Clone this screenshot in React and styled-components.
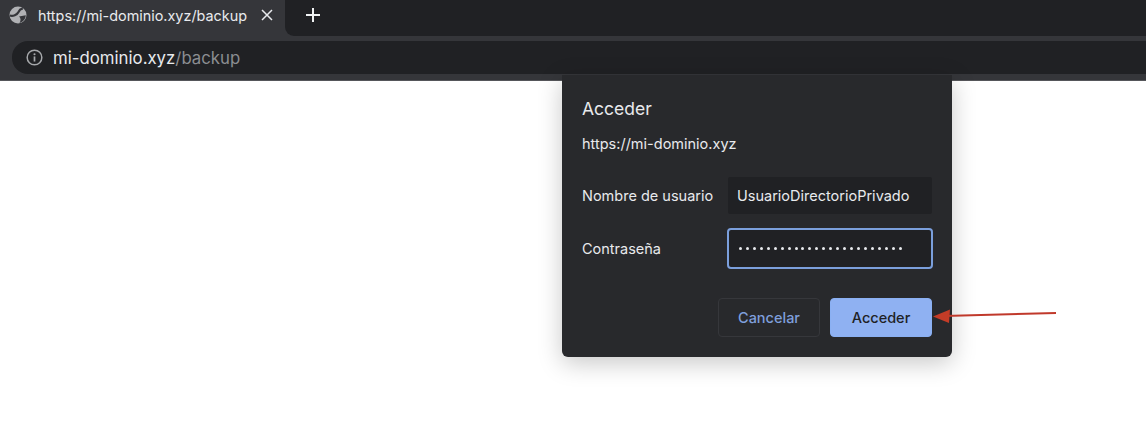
import styled, { createGlobalStyle } from 'styled-components';

const GlobalStyle = createGlobalStyle`
  html, body {
    margin: 0;
    padding: 0;
    background: #fff;
  }
  body {
    font-family: Inter, Roboto, "Liberation Sans", sans-serif;
  }
`;

const Page = styled.div`
  position: relative;
  width: 1146px;
  height: 428px;
  overflow: hidden;
  background: #fff;
`;

const BrowserChrome = styled.header`
  display: flex;
  flex-direction: column;
  background: #35363a;
`;

const TabStrip = styled.div`
  display: flex;
  height: 36px;
`;

const Tab = styled.div`
  flex: none;
  display: flex;
  align-items: center;
  width: 285px;
  height: 30px;
  padding-left: 9px;
  box-sizing: border-box;
  color: #e8eaed;
  font-size: 14.4px;
`;

const TabTitle = styled.span`
  margin-left: 11px;
  white-space: nowrap;
`;

const TabClose = styled.span`
  display: flex;
  margin-left: 14px;
  color: #e8eaed;
`;

const StripRest = styled.div`
  flex: 1;
  display: flex;
  padding: 7px 0 0 20px;
  background: #202124;
  border-bottom-left-radius: 9px;
  color: #f1f3f4;
`;

const Toolbar = styled.div`
  display: flex;
  padding: 5px 0 6px 12px;
  border-bottom: 1px solid #55565a;
`;

const Omnibox = styled.div`
  flex: 1;
  display: flex;
  align-items: center;
  height: 33px;
  padding-left: 14px;
  background: #202124;
  border-radius: 16px 0 0 16px;
  font-size: 16.8px;
`;

const HostText = styled.span`
  margin-left: 10px;
  color: #e8eaed;
`;

const PathText = styled.span`
  color: #8b8d91;
`;

const Dialog = styled.section`
  position: absolute;
  left: 562px;
  top: 75px;
  width: 390px;
  height: 282px;
  box-sizing: border-box;
  padding: 24px 20px 0;
  background: #28292c;
  border-radius: 0 0 6px 6px;
  box-shadow: 0 6px 24px rgba(0, 0, 0, 0.22);
  color: #e8eaed;
`;

const DialogTitle = styled.h2`
  margin: 0;
  font-size: 17.5px;
  font-weight: 400;
  line-height: 20px;
`;

const Origin = styled.p`
  margin: 16px 0 0;
  font-size: 14.5px;
  line-height: 18px;
`;

const Form = styled.div`
  display: grid;
  grid-template-columns: 146px 204px;
  grid-auto-rows: 37px;
  row-gap: 16px;
  align-items: center;
  margin-top: 24px;
`;

const FieldLabel = styled.label`
  font-size: 14.5px;
`;

const Field = styled.div`
  display: flex;
  align-items: center;
  height: 37px;
  box-sizing: border-box;
  padding-left: 9px;
  background: #202124;
  border-radius: 2px;
  font-size: 14.5px;
  ${({ $focused }) => $focused && `
    border: 2px solid #7b9fdc;
    border-radius: 4px;
    height: 41px;
    margin: 0 -1px;
    padding-left: 10px;
  `}
`;

const PasswordDots = styled.span`
  display: flex;
  gap: 3.95px;
`;

const Dot = styled.i`
  display: block;
  width: 3px;
  height: 3px;
  border-radius: 50%;
  background: #e8eaed;
`;

const Actions = styled.div`
  display: flex;
  justify-content: flex-end;
  gap: 10px;
  margin-top: 31px;
`;

const Button = styled.button`
  width: 102px;
  height: 39px;
  padding: 0;
  border: 1px solid ${({ $primary }) => ($primary ? '#8ab0f3' : '#36373b')};
  border-radius: 4px;
  background: ${({ $primary }) => ($primary ? '#8fb1f2' : 'transparent')};
  color: ${({ $primary }) => ($primary ? '#202124' : '#7f9fdc')};
  font-family: inherit;
  font-size: 14.5px;
  font-weight: 500;
`;

const ArrowMark = styled.svg`
  position: absolute;
  left: 930px;
  top: 300px;
`;

const GlobeIcon = () => (
  <svg width="18" height="18" viewBox="0 0 18 18">
    <circle cx="9" cy="9" r="8.5" fill="#b0b1b4" />
    <path
      d="M0.8 9.5 C4 10.5 8 9 9.5 6 C10.2 4.2 11.5 3 13.8 2.4"
      fill="none"
      stroke="#35363a"
      strokeWidth="2.2"
    />
    <path
      d="M10 10.5 L16.8 9.3 C16.6 13 14.2 16 10.5 17 C12 14.5 12 12 10 10.5 Z"
      fill="#35363a"
    />
  </svg>
);

const CloseIcon = () => (
  <svg width="12" height="12" viewBox="0 0 12 12">
    <path d="M1 1 L11 11 M11 1 L1 11" stroke="currentColor" strokeWidth="1.5" />
  </svg>
);

const PlusIcon = () => (
  <svg width="16" height="16" viewBox="0 0 16 16">
    <path d="M8 1 V15 M1 8 H15" stroke="currentColor" strokeWidth="2" />
  </svg>
);

const InfoIcon = () => (
  <svg width="17" height="17" viewBox="0 0 16 16">
    <circle cx="8" cy="8" r="6.9" fill="none" stroke="#a6a8ab" strokeWidth="1.4" />
    <path d="M8 7 V11.8" stroke="#a6a8ab" strokeWidth="1.6" />
    <circle cx="8" cy="4.9" r="1" fill="#a6a8ab" />
  </svg>
);

const App = () => (
  <Page>
    <GlobalStyle />
    <BrowserChrome>
      <TabStrip>
        <Tab>
          <GlobeIcon />
          <TabTitle>https://mi-dominio.xyz/backup</TabTitle>
          <TabClose>
            <CloseIcon />
          </TabClose>
        </Tab>
        <StripRest>
          <PlusIcon />
        </StripRest>
      </TabStrip>
      <Toolbar>
        <Omnibox>
          <InfoIcon />
          <HostText>
            mi-dominio.xyz<PathText>/backup</PathText>
          </HostText>
        </Omnibox>
      </Toolbar>
    </BrowserChrome>

    <Dialog>
      <DialogTitle>Acceder</DialogTitle>
      <Origin>https://mi-dominio.xyz</Origin>
      <Form>
        <FieldLabel>Nombre de usuario</FieldLabel>
        <Field>UsuarioDirectorioPrivado</Field>
        <FieldLabel>Contraseña</FieldLabel>
        <Field $focused>
          <PasswordDots>
            {Array.from({ length: 24 }, (_, i) => (
              <Dot key={i} />
            ))}
          </PasswordDots>
        </Field>
      </Form>
      <Actions>
        <Button>Cancelar</Button>
        <Button $primary>Acceder</Button>
      </Actions>
    </Dialog>

    <ArrowMark width="128" height="30" viewBox="0 0 128 30">
      <path d="M14 16 L126 13" stroke="#c0392b" strokeWidth="2" fill="none" />
      <path d="M3 16.5 L20 9.5 L19 23 Z" fill="#c43c27" />
    </ArrowMark>
  </Page>
);

export default App;
